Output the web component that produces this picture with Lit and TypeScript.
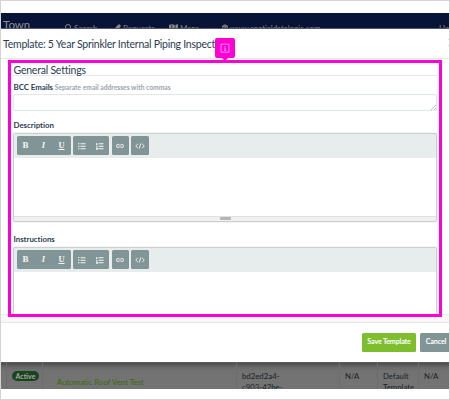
import { LitElement, html, css, svg } from "lit";
import { customElement, property } from "lit/decorators.js";

const ul = svg`<path d="M0 1h1.6M0 4h1.6M0 7h1.6M2.7 1H8M2.7 4H8M2.7 7H8" stroke="currentColor" stroke-width="1.25"/>`;
const ol = svg`<path d="M.8 0v2M0 2h1.6M0 4h1.4M0 6.2h1.5v1.5H0M2.7 1H8M2.7 4H8M2.7 7H8" fill="none" stroke="currentColor" stroke-width="1.1"/>`;

@customElement("rich-editor")
export class RichEditor extends LitElement {
  @property({ type: Boolean }) resizable = false;
  static styles = css`
    :host { display: flex; flex-direction: column; box-sizing: border-box; border: 1px solid #cbcfcf; border-radius: 2px; background: #fff; overflow: hidden; box-shadow: 0 0 0 .3px #d5d8d8; }
    .bar { box-sizing: border-box; flex: none; height: 24px; padding: 2.3px 0 0 2.5px; background: #e7eded; display: flex; gap: 2.5px; }
    .group { height: 19px; background: #829596; border-radius: 1.5px; color: #f3f5f5; display: flex; align-items: center; }
    .group > * { flex: 1; display: flex; justify-content: center; align-items: center; }
    .w3 { width: 54px; } .w2 { width: 36px; } .w1 { width: 17px; } .wc { width: 18px; }
    b, i, u { font: bold 8.5px/19px "Liberation Serif", serif; }
    b { font-size: 9px; }
    i { font-style: italic; }
    u { text-decoration: underline; text-decoration-thickness: 1px; text-underline-offset: 1px; }
    svg { display: block; flex: none; overflow: visible; }
    .grow { flex: 1; }
    .grip { height: 4.5px; flex: none; border-top: 1px solid #e1e1e1; background: #f0f0f0; display: flex; justify-content: center; align-items: center; }
    .grip span { width: 11px; height: 3px; background: #b5b5b5; border-radius: 1px; }
  `;
  render() {
    return html`<div class="bar">
        <div class="group w3"><b>B</b><i>I</i><span><u>U</u></span></div>
        <div class="group w2"><span><svg width="7.5" height="6.5" viewBox="0 0 8 8" preserveAspectRatio="none">${ul}</svg></span><span><svg width="7.5" height="6.5" viewBox="0 0 8 8" preserveAspectRatio="none">${ol}</svg></span></div>
        <div class="group w1"><span><svg width="8" height="4" viewBox="0 0 8 4" fill="none" stroke="currentColor" stroke-width=".9"><path d="M3.4.4H2.1a1.6 1.6 0 0 0 0 3.2h1.3M4.6.4h1.3a1.6 1.6 0 0 1 0 3.2H4.6M2.5 2h3"/></svg></span></div>
        <div class="group wc"><span><svg width="10" height="6" viewBox="0 0 10 6" fill="none" stroke="currentColor" stroke-width=".9"><path d="M2.9.9.7 3l2.2 2.1M7.1.9 9.3 3 7.1 5.1M5.8.3 4.2 5.7"/></svg></span></div>
      </div>
      <div class="grow"></div>
      ${this.resizable ? html`<div class="grip"><span></span></div>` : ""}`;
  }
}

@customElement("app-root")
export class AppRoot extends LitElement {
  static styles = css`
    :host { display: block; position: relative; box-sizing: border-box; width: 450px; height: 400px; border: 1px solid #d3d3d3; background: #fff; overflow: hidden; font-family: Lato, sans-serif; font-variant-ligatures: none; color: #2b3d4f; white-space: nowrap; }
    .nav { box-sizing: border-box; margin-top: 12px; height: 16px; background: #081338; color: #8a8884; overflow: hidden; display: flex; align-items: flex-start; font-size: 8px; line-height: 10px; border-bottom: 1px solid #555868; }
    .town { width: 64px; flex: none; padding: 5px 0 0 2px; box-sizing: border-box; font-size: 11.5px; line-height: 14px; color: #8e9096; }
    .link { display: flex; flex: none; gap: 2px; padding-top: 10px; box-sizing: border-box; }
    .link svg { flex: none; margin-top: 1px; }
    .search { width: 50px; } .req { width: 54px; } .maps { width: 53px; } .site { width: 217px; letter-spacing: -.04px; }
    .head { box-sizing: border-box; height: 30px; border-bottom: 1px solid #e7e7e7; padding-left: 2px; font-size: 10.5px; letter-spacing: -.24px; line-height: 30px; display: flex; justify-content: space-between; }
    .close { width: 1px; height: 5px; margin-top: 10px; border-top: 1px solid #ddd; border-bottom: 1px solid #ddd; }
    .body { box-sizing: border-box; height: 256px; padding: 4px 12px 0; overflow: hidden; border-bottom: 1px solid #ececec; }
    .section { box-sizing: border-box; height: 13px; border-bottom: 1px solid #e8e8ea; padding-left: .5px; font-size: 10.5px; letter-spacing: -.22px; line-height: 14px; }
    .label { font-size: 7.9px; line-height: 11px; font-weight: 700; padding-left: .5px; letter-spacing: -.04px; }
    .bcc { height: 12px; margin-top: 6px; display: flex; gap: 1.8px; }
    .hint { color: #98a3ad; font-size: 6.7px; font-weight: 700; letter-spacing: 0; }
    .box { box-sizing: border-box; height: 17px; border: 1px solid #dfe6ee; border-radius: 2px; display: flex; justify-content: flex-end; align-items: flex-end; }
    .box svg { display: block; }
    .desc { margin-top: 9px; height: 13px; }
    .ed1 { height: 89px; }
    .inst { margin-top: 12px; height: 13px; }
    .ed2 { height: 80px; }
    .strip { box-sizing: border-box; height: 8px; background: #f8f8f8; border-bottom: 1px solid #e8e8e8; }
    .foot { box-sizing: border-box; height: 39px; padding: 10px 0 0 361px; display: flex; gap: 4px; }
    .btn { flex: none; height: 18.5px; line-height: 18.5px; border-radius: 1.5px; color: #fff; background: #7dbd2e; text-align: center; width: 54px; font-size: 7.2px; letter-spacing: -.18px; font-weight: 700; }
    .cancel { width: 32px; background: #829596; }
    .table { box-sizing: border-box; height: 27px; background: linear-gradient(#4b4b4b, #686868 4px, #727272 8px, #747474); display: grid; grid-template-columns: 6px 36px 194px 103px 38px 41px 60px; overflow: hidden; font-size: 7.8px; line-height: 11px; color: #1a2129; border-top: 1px solid #5b605c; }
    .table > div { box-sizing: border-box; border-right: 1px solid #6c6c6c; padding: 8px 0 0 5px; }
    .pill { width: 27px; height: 10px; line-height: 10px; border-radius: 5px; background: #1a441f; color: #a2aaa2; font-size: 7px; font-weight: 700; text-align: center; }
    .table .vent { padding: 14px 0 0 14px; color: #3a6a08; }
    .mark { position: absolute; left: 7px; top: 59px; width: 434px; height: 257px; box-sizing: border-box; border: 3px solid #ff00d4; }
    .tag { position: absolute; left: 214px; top: 37px; width: 20px; height: 23px; }
  `;
  render() {
    return html`
      <div class="nav">
        <div class="town">Town</div>
        <div class="link search"><svg width="7" height="8" viewBox="0 0 7 8" fill="none" stroke="currentColor"><circle cx="3" cy="3" r="2.5"/><path d="m5 5 2 2"/></svg>Search</div>
        <div class="link req"><svg width="6" height="8" viewBox="0 0 6 8"><path d="m0 4 4-4 2 2-4 5H0z" fill="currentColor"/></svg>Requests</div>
        <div class="link maps"><svg width="9" height="8" viewBox="0 0 9 8"><path d="M0 1 2.5 0v7L0 8zM3.2 0l2.5 1v7L3.2 7zM6.4 1 9 0v7L6.4 8z" fill="currentColor"/></svg>Maps</div>
        <div class="link site"><svg width="6" height="8" viewBox="0 0 7 8" fill="none" stroke="currentColor"><circle cx="3.5" cy="3.5" r="3"/><path d="M0 2h7M3.5 0v7M0 4h7"/></svg>www.spatialdatalogic.com</div>
        <div class="link">Help</div>
      </div>
      <div class="head"><span class="title">Template: 5 Year Sprinkler Internal Piping Inspect</span><span class="close"></span></div>
      <div class="body">
        <div class="section">General Settings</div>
        <div class="label bcc"><span>BCC Emails</span><span class="hint">Separate email addresses with commas</span></div>
        <div class="box"><svg width="5" height="5" viewBox="0 0 5 5"><path d="M0 5 5 0M3 5l2-2" stroke="#aaa" stroke-width=".8"/></svg></div>
        <div class="label desc">Description</div>
        <rich-editor class="ed1" resizable></rich-editor>
        <div class="label inst">Instructions</div>
        <rich-editor class="ed2"></rich-editor>
      </div>
      <div class="strip"></div>
      <div class="foot"><div class="btn">Save Template</div><div class="btn cancel">Cancel</div></div>
      <div class="table">
        <div></div>
        <div><div class="pill">Active</div></div>
        <div class="vent">Automatic Roof Vent Test</div>
        <div>bd2ed2a4-<br>c903-42be-</div>
        <div>N/A</div>
        <div>Default<br>Template</div>
        <div>N/A</div>
      </div>
      <div class="mark"></div>
      <svg class="tag" viewBox="0 0 20 23"><path d="M2 0h16a2 2 0 0 1 2 2v16a2 2 0 0 1-2 2h-5l-3 3-3-3H2a2 2 0 0 1-2-2V2a2 2 0 0 1 2-2z" fill="#ff00d4"/><path d="M6 6.2h8v8H6zM10 8v1M9.2 10h.9v2.4M9 12.4h2.2" fill="none" stroke="#ff9bec" stroke-width=".9"/></svg>
    `;
  }
}
